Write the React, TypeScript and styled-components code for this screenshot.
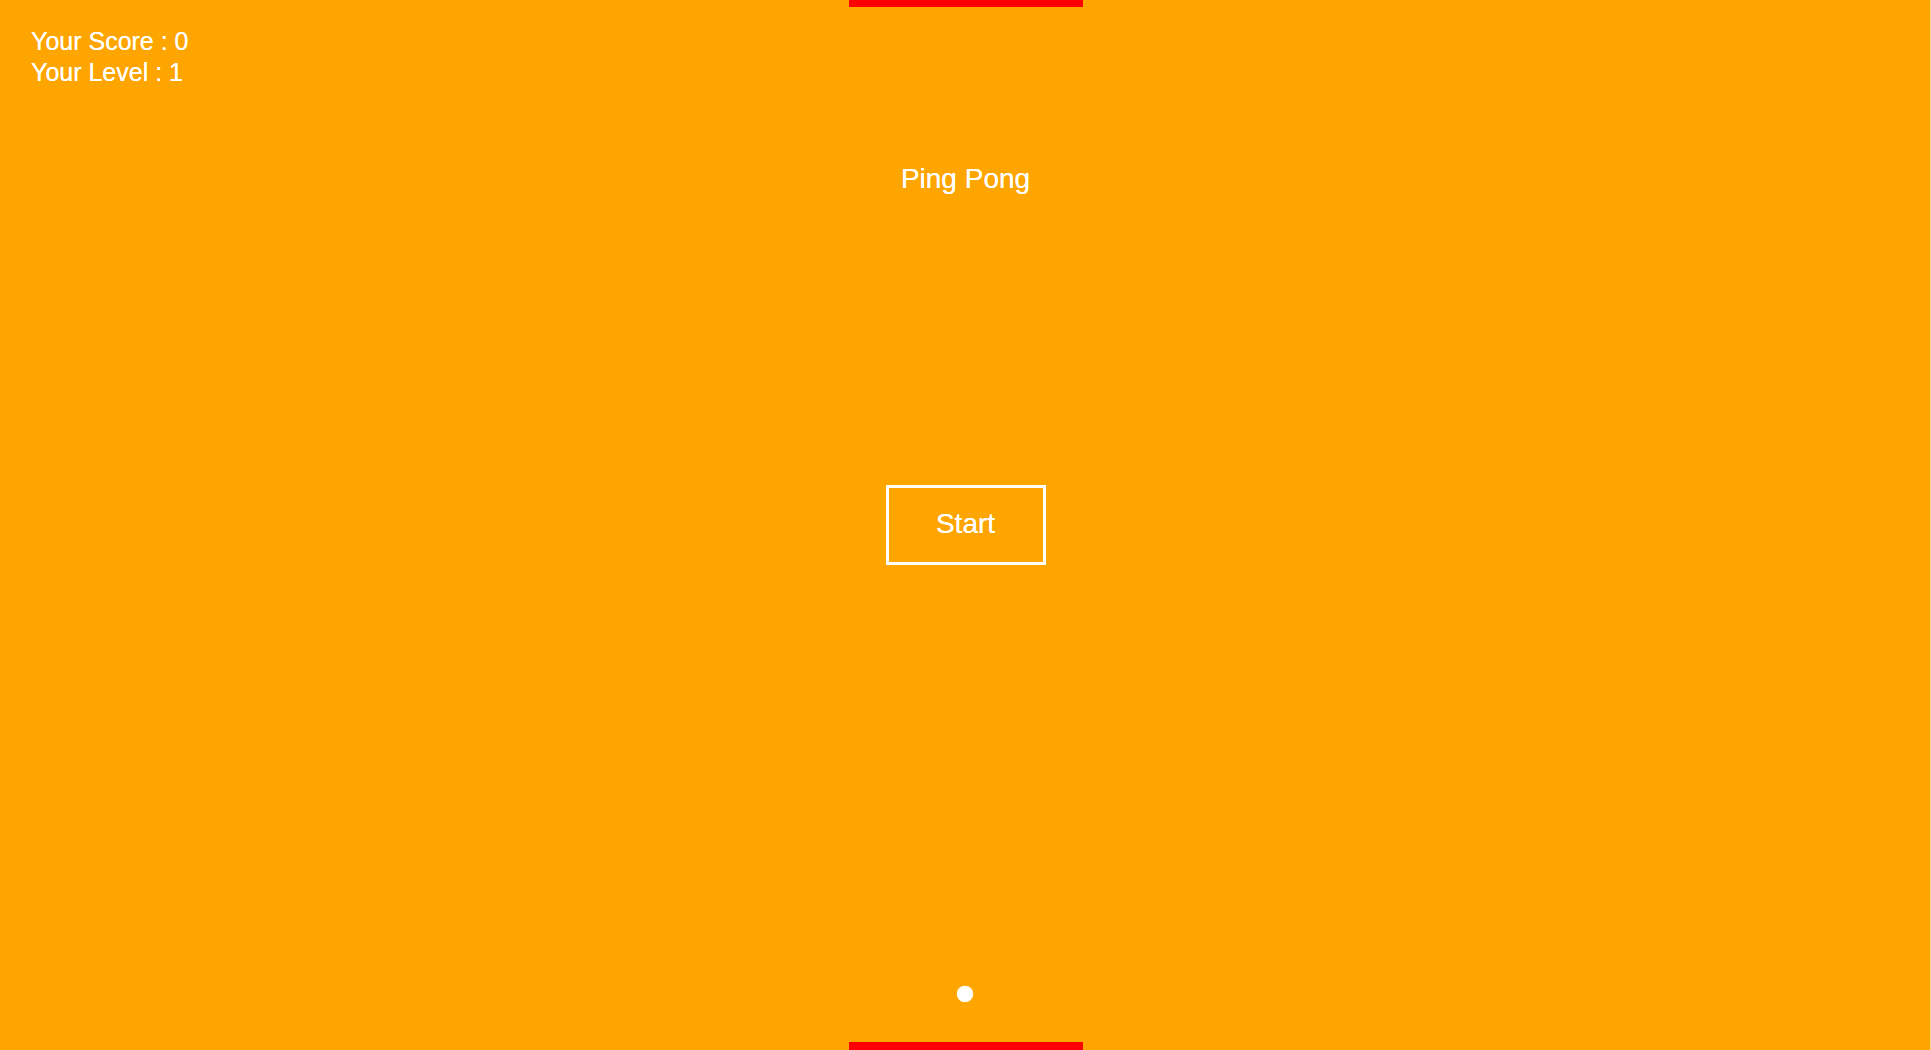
import React from "react";
import styled, { createGlobalStyle } from "styled-components";

const Global = createGlobalStyle`
  html, body { margin: 0; padding: 0; }
  body { font-family: "Liberation Sans", Arial, sans-serif; overflow: hidden; }
`;

const Court = styled.div`
  position: relative;
  width: 100vw;
  height: 100vh;
  background: #ffa500;
  box-shadow: inset -1px 0 0 #ffd98a;
  display: flex;
  flex-direction: column;
  align-items: center;
  color: #ffffff;
`;

const Paddle = styled.div<{ $bottom?: boolean }>`
  width: 234px;
  height: ${(p) => (p.$bottom ? "8px" : "7px")};
  background: #ff0000;
  flex-shrink: 0;
  margin-top: ${(p) => (p.$bottom ? "auto" : "0")};
`;

const Hud = styled.div`
  position: absolute;
  top: 26px;
  left: 31px;
  font-size: 25px;
  line-height: 31px;
  text-shadow: 0 0 0.4px #ffffff;
`;

const HudLine = styled.div``;

const Title = styled.h1`
  margin: 158px 0 0;
  font-size: 28px;
  font-weight: 400;
  line-height: 28px;
  text-shadow: 0 0 0.4px #ffffff;
`;

const StartButton = styled.button`
  margin-top: 292px;
  width: 160px;
  height: 80px;
  box-sizing: border-box;
  background: transparent;
  border: 3px solid #ffffff;
  color: #ffffff;
  font-family: "Liberation Sans", Arial, sans-serif;
  font-size: 28px;
  line-height: 28px;
  padding: 0 0 2px;
  cursor: pointer;
  text-shadow: 0 0 0.4px #ffffff;
`;

const Ball = styled.div`
  position: absolute;
  left: 957px;
  top: 986px;
  width: 16px;
  height: 16px;
  border-radius: 50%;
  background: #ffffff;
  box-shadow: 0 0 1px #ffffff;
`;

export default function App() {
  return (
    <>
      <Global />
      <Court>
        <Paddle />
        <Hud>
          <HudLine>Your Score : 0</HudLine>
          <HudLine>Your Level : 1</HudLine>
        </Hud>
        <Title>Ping Pong</Title>
        <StartButton>Start</StartButton>
        <Ball />
        <Paddle $bottom />
      </Court>
    </>
  );
}
